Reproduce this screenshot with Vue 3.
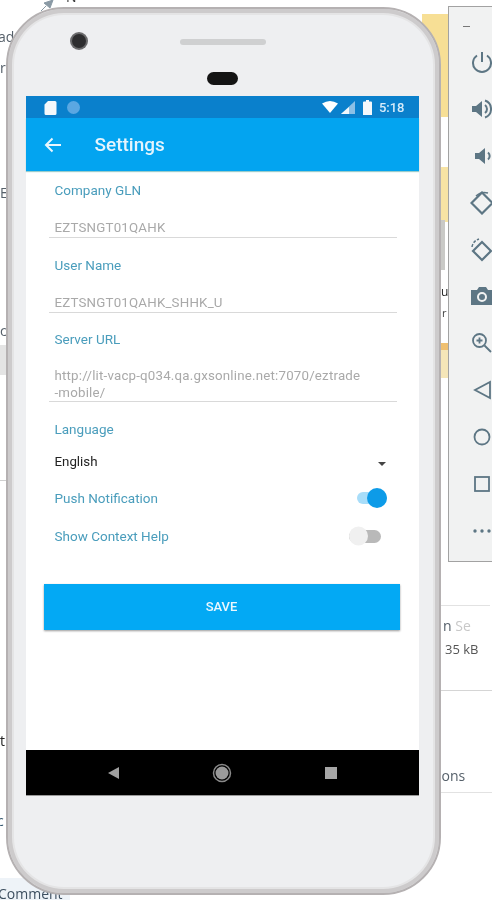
<script setup>
const fields = [
  { label: 'Company GLN', value: ['EZTSNGT01QAHK'] },
  { label: 'User Name', value: ['EZTSNGT01QAHK_SHHK_U'] },
  { label: 'Server URL', value: ['http://lit-vacp-q034.qa.gxsonline.net:7070/eztrade', '-mobile/'] },
]
</script>

<template>
  <div class="desktop">
    <!-- window fragments behind the emulator -->
    <div class="bg yellow"></div>
    <div class="bg yellow-cut"></div>
    <div class="bg yellow-low"></div>
    <div class="bg grey-strip"></div>
    <div class="bg orange"></div>
    <div class="bg band-left"></div>
    <div class="bg band-bottom"></div>
    <div class="bg rule r1"></div>
    <div class="bg rule r2"></div>
    <div class="bg rule r3"></div>
    <div class="bg rule r4"></div>
    <svg class="bg pin" width="16" height="12" viewBox="0 0 16 12"><path d="M2 11l5-5M5 3l6 5 3-8z" fill="#8a9aa5" stroke="#8a9aa5"/></svg>
    <span class="scrap s-n">N</span>
    <span class="scrap s-ad">ad</span>
    <span class="scrap s-r">r</span>
    <span class="scrap s-e">E</span>
    <span class="scrap s-c">c</span>
    <span class="scrap s-t">t</span>
    <span class="scrap s-x">c</span>
    <span class="scrap s-u">u</span>
    <span class="scrap s-f">r</span>
    <span class="scrap s-comment">Comment</span>
    <span class="scrap s-se">n <em>Se</em></span>
    <span class="scrap s-kb">35 kB</span>
    <span class="scrap s-ions">ions</span>

    <!-- phone -->
    <div class="phone">
      <div class="bezel-top">
        <span class="camera"></span>
        <span class="speaker"></span>
        <span class="sensor"></span>
      </div>
      <div class="screen">
        <div class="statusbar">
          <svg class="st-sim" width="13" height="15" viewBox="0 0 13 15"><path d="M4 1h7a1.5 1.5 0 0 1 1.5 1.500V13.500A1.500 1.500 0 0 1 11 15H2A1.500 1.500 0 0 1 .5 13.500V4.500z" fill="#f4f8fb"/></svg>
          <span class="st-dot"></span>
          <span class="st-spacer"></span>
          <svg width="16" height="12" viewBox="0 0 16 12"><path d="M0 2.500Q8-2.500 16 2.500L8 12z" fill="#fff"/></svg>
          <svg class="st-signal" width="14" height="13" viewBox="0 0 14 13"><path d="M14 0v13H0z" fill="#8cc0e6"/><path d="M8 6v7H0z" fill="#f2f8fc"/></svg>
          <svg class="st-batt" width="9" height="15" viewBox="0 0 9 15"><path d="M3 0h3v1.500h2a1 1 0 0 1 1 1V15H0V2.500a1 1 0 0 1 1-1h2z" fill="#f4f8fb"/></svg>
          <span class="st-time">5:18</span>
        </div>
        <div class="appbar">
          <svg class="back" width="18" height="16" viewBox="0 0 18 16"><path d="M17 8H2M8.500 1.500 2 8l6.500 6.500" fill="none" stroke="#e8f6fe" stroke-width="2"/></svg>
          <span class="title">Settings</span>
        </div>
        <div class="content">
          <div v-for="f in fields" :key="f.label" class="field">
            <div class="label">{{ f.label }}</div>
            <div class="value" :class="{ multi: f.value.length > 1 }">
              <div v-for="line in f.value" :key="line">{{ line }}</div>
            </div>
          </div>
          <div class="label">Language</div>
          <div class="select">
            <span>English</span>
            <span class="caret"></span>
          </div>
          <div class="row row-push">
            <span class="label">Push Notification</span>
            <span class="switch on"><i></i></span>
          </div>
          <div class="row row-help">
            <span class="label">Show Context Help</span>
            <span class="switch off"><i></i></span>
          </div>
          <button class="save">SAVE</button>
        </div>
        <div class="navbar">
          <svg width="12" height="14" viewBox="0 0 12 14"><path d="M12 1v12L1 7z" fill="#a0a0a0"/></svg>
          <svg width="20" height="20" viewBox="0 0 20 20"><circle cx="10" cy="10" r="6.500" fill="#9a9a9a"/><circle cx="10" cy="10" r="8.500" fill="none" stroke="#8a8a8a" stroke-width="1.500"/></svg>
          <svg width="12" height="12" viewBox="0 0 12 12"><rect width="12" height="12" fill="#a6a6a6"/></svg>
        </div>
      </div>
    </div>

    <!-- emulator side toolbar -->
    <aside class="toolbar">
      <span class="dash"></span>
      <div class="tools">
        <svg viewBox="0 0 24 24"><path d="M12 2v10M7 5.500a9 9 0 1 0 10 0" fill="none" stroke="#5d7684" stroke-width="2"/></svg>
        <svg viewBox="0 0 24 24"><path d="M2 9h4l6-5v16l-6-5H2z" fill="#5d7684"/><path d="M15 8a5 5 0 0 1 0 8M15 3.500a9 9 0 0 1 0 17" fill="none" stroke="#5d7684" stroke-width="2"/></svg>
        <svg viewBox="0 0 24 24"><path d="M5 9h4l6-5v16l-6-5H5z" fill="#5d7684"/><path d="M18 8.500a4.500 4.500 0 0 1 0 7" fill="none" stroke="#5d7684" stroke-width="2"/></svg>
        <svg viewBox="0 0 24 24"><path d="M1.500 12 12 1.500 22.500 12 12 22.500z" fill="none" stroke="#5d7684" stroke-width="2.200"/><path d="M6 5q5-5 12-3" fill="none" stroke="#5d7684" stroke-width="1.500"/></svg>
        <svg viewBox="0 0 24 24"><path d="M3 13 12 4l9 9-9 9z" fill="none" stroke="#5d7684" stroke-width="2.200"/><path d="M2 9q1-6 7-8" fill="none" stroke="#5d7684" stroke-width="1.500" stroke-dasharray="3 1.500"/></svg>
        <svg viewBox="0 0 24 24"><path d="M1 6h6l2-3h7l2 3h6v15H1z" fill="#5d7684"/><circle cx="12" cy="13" r="4" fill="none" stroke="#f1f2f2" stroke-width="2"/></svg>
        <svg viewBox="0 0 24 24"><circle cx="9.500" cy="9.500" r="6.500" fill="none" stroke="#5d7684" stroke-width="1.800"/><path d="M14.500 14.500 21 21M6.500 9.500h6M9.500 6.500v6" fill="none" stroke="#5d7684" stroke-width="1.800"/></svg>
        <svg viewBox="0 0 24 24"><path d="M20 4v16L5 12z" fill="none" stroke="#5d7684" stroke-width="1.800"/></svg>
        <svg viewBox="0 0 24 24"><circle cx="12" cy="12" r="7.500" fill="none" stroke="#5d7684" stroke-width="1.800"/></svg>
        <svg viewBox="0 0 24 24"><rect x="5" y="5" width="14" height="14" fill="none" stroke="#5d7684" stroke-width="1.800"/></svg>
        <svg viewBox="0 0 24 24"><circle cx="5" cy="12" r="1.700" fill="#5d7684"/><circle cx="12" cy="12" r="1.700" fill="#5d7684"/><circle cx="19" cy="12" r="1.700" fill="#5d7684"/></svg>
      </div>
    </aside>
  </div>
</template>

<style scoped>
.desktop {
  position: relative;
  width: 492px;
  height: 900px;
  overflow: hidden;
  background: #fff;
  font-family: Roboto, "Liberation Sans", sans-serif;
  filter: blur(0.5px);
}
.bg { position: absolute; }
.yellow { left: 422px; top: 14px; width: 26px; height: 103px; background: #f7df95; }
.yellow-cut { left: 422px; top: 167px; width: 26px; height: 55px; background: #f7e3a4; }
.yellow-low { left: 441px; top: 350px; width: 7px; height: 28px; background: #f5e6b8; }
.grey-strip { left: 440px; top: 220px; width: 5px; height: 50px; background: #c9c9c6; }
.orange { left: 441px; top: 343px; width: 7px; height: 7px; background: #f0c070; }
.band-left { left: 0; top: 345px; width: 8px; height: 30px; background: #e4e4e4; }
.band-bottom { left: 0; top: 878px; width: 70px; height: 22px; background: #eef3f8; }
.rule { height: 1px; background: #e2e2e2; }
.r1 { left: 440px; top: 605px; width: 50px; }
.r2 { left: 440px; top: 690px; width: 52px; background: #d5d5d5; }
.r3 { left: 440px; top: 792px; width: 52px; }
.r4 { left: 0; top: 480px; width: 8px; background: #cfcfcf; }
.pin { left: 39px; top: 0; }
.scrap {
  position: absolute;
  font-family: "Open Sans", "Liberation Sans", sans-serif;
  font-size: 14px;
  line-height: 18px;
  color: #56606a;
  white-space: nowrap;
}
.s-n { left: 66px; top: -12px; color: #333; }
.s-ad { left: -2px; top: 28px; }
.s-r { left: 0; top: 59px; }
.s-e { left: 0; top: 184px; }
.s-c { left: 0; top: 322px; }
.s-t { left: 0; top: 732px; color: #222; }
.s-x { left: -3px; top: 812px; color: #33566e; }
.s-u { left: 441px; top: 283px; color: #222; font-size: 12px; }
.s-f { left: 442px; top: 304px; color: #444; font-size: 11px; }
.s-comment { left: -2px; top: 885px; color: #3d4f60; font-size: 14px; }
.s-se { left: 443px; top: 617px; }
.s-se em { font-style: normal; color: #c8c8c8; }
.s-kb { left: 445px; top: 640px; color: #555; font-size: 13px; }
.s-ions { left: 438px; top: 767px; }

.phone {
  position: absolute;
  left: 6px;
  top: 7px;
  width: 435px;
  height: 888px;
  box-sizing: border-box;
  display: flex;
  flex-direction: column;
  align-items: center;
  border: 2px solid #b5b1b2;
  border-radius: 58px;
  background: #eeeff1;
  box-shadow: inset 0 0 0 4px #cdcbcc, inset 0 0 0 6px #e4e4e5;
}
.bezel-top { position: relative; width: 100%; height: 87px; flex: none; }
.camera {
  position: absolute;
  left: 64px;
  top: 25px;
  width: 14px;
  height: 14px;
  border-radius: 50%;
  background: #2d2d2f;
  box-shadow: 0 0 0 2px #6b6b6d;
}
.speaker {
  position: absolute;
  left: 172px;
  top: 30px;
  width: 86px;
  height: 6px;
  border-radius: 3px;
  background: #cfd0d1;
}
.sensor {
  position: absolute;
  left: 199px;
  top: 63px;
  width: 31px;
  height: 13px;
  border-radius: 7px;
  background: #141414;
}

.screen {
  width: 393px;
  height: 700px;
  flex: none;
  margin-right: 3px;
  display: flex;
  flex-direction: column;
  background: #fff;
}
.statusbar {
  height: 22px;
  flex: none;
  display: flex;
  align-items: center;
  padding: 0 14px 0 18px;
  background: #0a80cc;
}
.st-sim { margin-top: 1px; }
.st-dot {
  width: 13px;
  height: 13px;
  margin-left: 10px;
  border-radius: 50%;
  background: #5aa7e2;
}
.st-spacer { flex: 1; }
.st-signal { margin-left: 3px; }
.st-batt { margin-left: 8px; }
.st-time {
  margin-left: 7px;
  font-size: 13px;
  font-weight: 500;
  color: #d8ecfa;
}
.appbar {
  height: 53px;
  flex: none;
  display: flex;
  align-items: center;
  padding-left: 18px;
  background: #03a4f0;
  box-shadow: 0 1px 1px #9cc;
  position: relative;
}
.title {
  margin-left: 33px;
  font-size: 19px;
  font-weight: 500;
  color: #e4f4fd;
}
.content {
  flex: 1;
  padding: 9px 0 0 23px;
  display: flex;
  flex-direction: column;
  align-items: flex-start;
}
.field {
  width: 348px;
  margin-bottom: 16.500px;
  border-bottom: 1.500px solid #d9d9d9;
}
.label {
  padding-left: 6px;
  font-size: 13.500px;
  line-height: 20px;
  color: #4a9dbc;
}
.value {
  margin-top: 19px;
  padding: 0 6px 1px;
  font-size: 13.300px;
  line-height: 17px;
  letter-spacing: 0.2px;
  color: #a9a9a9;
  white-space: nowrap;
}
.value.multi { margin-top: 18px; padding-bottom: 0; }
.select {
  width: 331px;
  height: 20px;
  margin-top: 13px;
  padding-left: 6px;
  display: flex;
  align-items: center;
  justify-content: space-between;
  font-size: 13.300px;
  color: #222;
}
.caret {
  width: 0;
  height: 0;
  margin-top: 4px;
  border-left: 4px solid transparent;
  border-right: 4px solid transparent;
  border-top: 4px solid #444;
}
.row {
  display: flex;
  align-items: center;
  justify-content: space-between;
}
.row-push { width: 338px; height: 24px; margin-top: 14.500px; }
.row-help { width: 332px; height: 24px; margin-top: 14px; }
.switch { position: relative; display: block; border-radius: 7px; }
.switch i { position: absolute; top: 50%; border-radius: 50%; transform: translateY(-50%); }
.switch.on { width: 30px; height: 12px; background: #a8ddf9; }
.switch.on i { right: 0; width: 20px; height: 20px; background: #0d9be8; }
.switch.off { width: 32px; height: 13px; background: #b9b9b9; }
.switch.off i { left: 0; width: 19px; height: 19px; background: #f0f0f0; }
.save {
  width: 356px;
  height: 46px;
  margin: 35.500px 0 0 -5px;
  padding: 0;
  border: none;
  background: #03a9f4;
  box-shadow: 0 1px 2px #999;
  font-family: inherit;
  font-size: 13px;
  font-weight: 500;
  color: #eaf7fe;
}
.navbar {
  height: 46px;
  flex: none;
  display: grid;
  grid-template-columns: 109px 109px 109px;
  justify-items: center;
  justify-content: start;
  align-items: center;
  padding-left: 32.500px;
  background: #000;
  border-bottom: 1px solid #999;
  box-sizing: border-box;
}

.toolbar {
  position: absolute;
  left: 448px;
  top: 6px;
  width: 60px;
  height: 556px;
  box-sizing: border-box;
  border: 1.500px solid #a2a2a2;
  background: #f1f2f2;
}
.dash {
  display: block;
  width: 7px;
  height: 1px;
  margin: 19px 0 0 14px;
  background: #777;
}
.tools {
  display: flex;
  flex-direction: column;
  margin: 23px 0 0 21px;
  gap: 22.900px;
}
.tools svg { display: block; width: 24px; height: 24px; }
</style>
